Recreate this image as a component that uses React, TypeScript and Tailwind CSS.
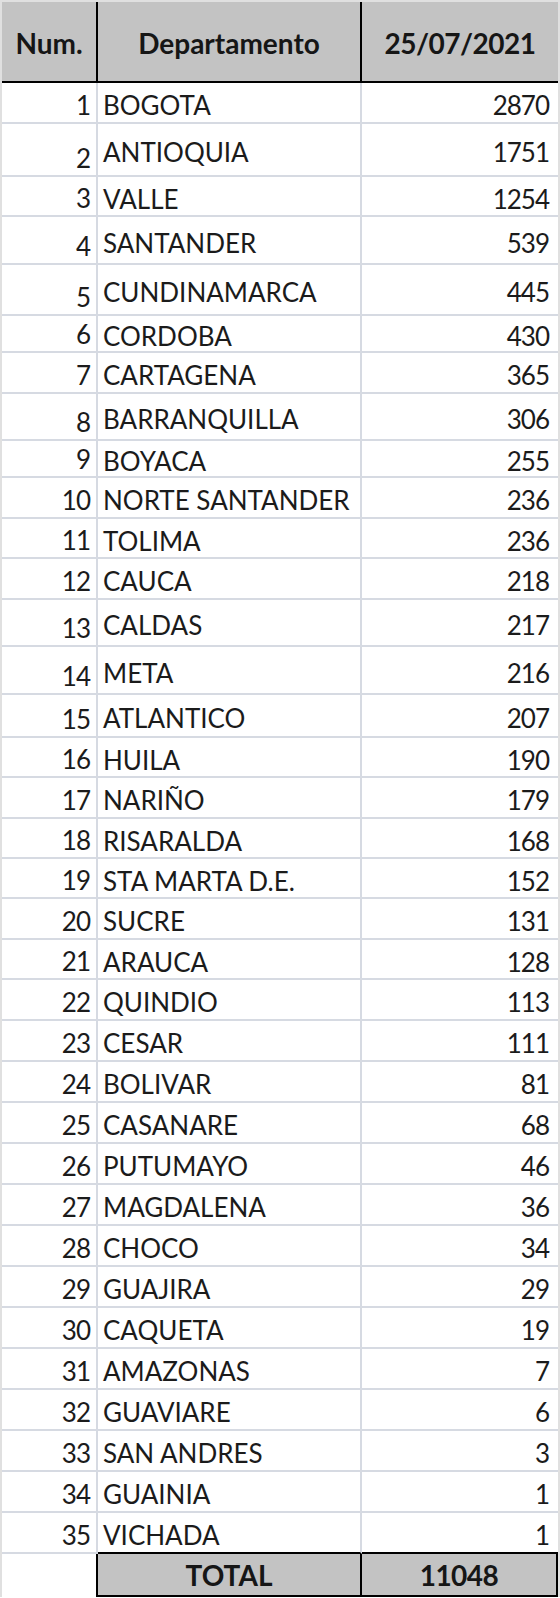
import React from "react";

type Row = { n: number; name: string; v: number; h: string; last?: boolean };

const rows: Row[] = [
  { n: 1, name: "BOGOTA", v: 2870, h: "h-[41px]" },
  { n: 2, name: "ANTIOQUIA", v: 1751, h: "h-[53px]" },
  { n: 3, name: "VALLE", v: 1254, h: "h-[40px]" },
  { n: 4, name: "SANTANDER", v: 539, h: "h-[48px]" },
  { n: 5, name: "CUNDINAMARCA", v: 445, h: "h-[51px]" },
  { n: 6, name: "CORDOBA", v: 430, h: "h-[37px]" },
  { n: 7, name: "CARTAGENA", v: 365, h: "h-[41px]" },
  { n: 8, name: "BARRANQUILLA", v: 306, h: "h-[47px]" },
  { n: 9, name: "BOYACA", v: 255, h: "h-[37px]" },
  { n: 10, name: "NORTE SANTANDER", v: 236, h: "h-[41px]" },
  { n: 11, name: "TOLIMA", v: 236, h: "h-[40px]" },
  { n: 12, name: "CAUCA", v: 218, h: "h-[41px]" },
  { n: 13, name: "CALDAS", v: 217, h: "h-[47px]" },
  { n: 14, name: "META", v: 216, h: "h-[48px]" },
  { n: 15, name: "ATLANTICO", v: 207, h: "h-[43px]" },
  { n: 16, name: "HUILA", v: 190, h: "h-[40px]" },
  { n: 17, name: "NARIÑO", v: 179, h: "h-[41px]" },
  { n: 18, name: "RISARALDA", v: 168, h: "h-[40px]" },
  { n: 19, name: "STA MARTA D.E.", v: 152, h: "h-[40px]" },
  { n: 20, name: "SUCRE", v: 131, h: "h-[41px]" },
  { n: 21, name: "ARAUCA", v: 128, h: "h-[40px]" },
  { n: 22, name: "QUINDIO", v: 113, h: "h-[41px]" },
  { n: 23, name: "CESAR", v: 111, h: "h-[41px]" },
  { n: 24, name: "BOLIVAR", v: 81, h: "h-[41px]" },
  { n: 25, name: "CASANARE", v: 68, h: "h-[41px]" },
  { n: 26, name: "PUTUMAYO", v: 46, h: "h-[41px]" },
  { n: 27, name: "MAGDALENA", v: 36, h: "h-[41px]" },
  { n: 28, name: "CHOCO", v: 34, h: "h-[41px]" },
  { n: 29, name: "GUAJIRA", v: 29, h: "h-[41px]" },
  { n: 30, name: "CAQUETA", v: 19, h: "h-[41px]" },
  { n: 31, name: "AMAZONAS", v: 7, h: "h-[41px]" },
  { n: 32, name: "GUAVIARE", v: 6, h: "h-[41px]" },
  { n: 33, name: "SAN ANDRES", v: 3, h: "h-[41px]" },
  { n: 34, name: "GUAINIA", v: 1, h: "h-[41px]" },
  { n: 35, name: "VICHADA", v: 1, h: "h-[41px]", last: true },
];

function BodyRow({ r }: { r: Row }) {
  const bottom = r.last ? "border-b-black" : "border-b-[#d6dae2]";
  return (
    <div className={`flex ${r.h} text-[26px] leading-none`}>
      <div className="w-[96px] flex items-end justify-end pr-[6px] pb-[4px] border-r-2 border-b-2 border-[#d6dae2] tracking-[-1px]">
        {r.n}
      </div>
      <div className={`w-[264px] flex items-center pl-[5px] pt-[5px] border-r-2 border-b-2 border-r-[#d6dae2] ${bottom}`}>
        {r.name}
      </div>
      <div className={`flex-1 flex items-center justify-end pr-[9px] pt-[5px] border-b-2 tracking-[-1px] ${bottom}`}>
        {r.v}
      </div>
    </div>
  );
}

export default function App() {
  return (
    <div className="w-[560px] bg-white font-['Lato',sans-serif] text-[#1b1b1b] border-x-2 border-t-2 border-[#e0e0e0]">
      <div className="flex h-[81px] bg-[#c3c3c3] border-b-2 border-black font-bold text-[28px] leading-none text-[#161616]">
        <div className="w-[96px] border-r-2 border-black flex items-center justify-center pt-[3px]">
          Num.
        </div>
        <div className="w-[264px] border-r-2 border-black flex items-center justify-center pt-[3px]">
          Departamento
        </div>
        <div className="flex-1 flex items-center justify-center pt-[3px] tracking-[-0.5px]">25/07/2021</div>
      </div>
      {rows.map((r) => (
        <BodyRow key={r.n} r={r} />
      ))}
      <div className="flex h-[43px] font-bold text-[28px] leading-none text-[#161616]">
        <div className="w-[96px] border-r-2 border-black bg-white"></div>
        <div className="w-[264px] border-r-2 border-b-2 border-black bg-[#c3c3c3] flex items-center justify-center pt-[1px]">
          TOTAL
        </div>
        <div className="flex-1 border-r-2 border-b-2 border-black bg-[#c3c3c3] flex items-center justify-center pt-[1px] tracking-[-0.5px]">
          11048
        </div>
      </div>
    </div>
  );
}
